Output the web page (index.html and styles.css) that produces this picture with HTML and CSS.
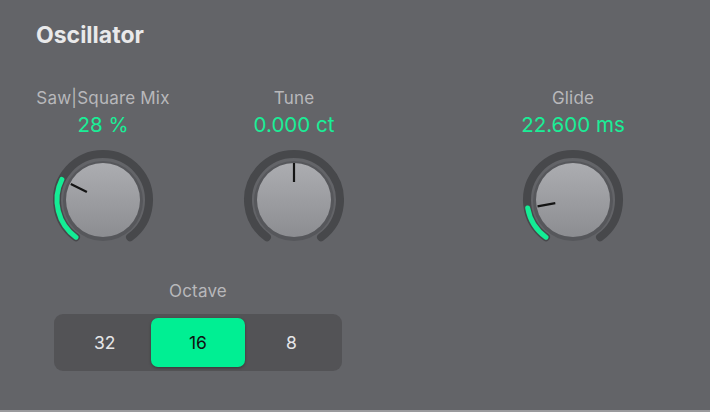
FILE: index.html
```html
<!DOCTYPE html>
<html lang="en">
<head>
    <meta charset="UTF-8">
    <meta name="viewport" content="width=device-width, initial-scale=1.0">
    <title>Oscillator</title>
    <link rel="stylesheet" href="styles.css">
</head>
<body>

    <div class="panel">
        <div class="panel-title">Oscillator</div>

        <div class="knob-row">
            <div class="control">
                <div class="control-label">Saw|Square Mix</div>
                <div class="control-value">28 %</div>
                <svg class="knob" width="110" height="110" viewBox="0 0 110 110">
                    <defs>
                        <linearGradient id="cap1" x1="0" y1="0" x2="0" y2="1">
                            <stop offset="0" stop-color="#acadb1"/>
                            <stop offset="1" stop-color="#8c8d91"/>
                        </linearGradient>
                    </defs>
                    <path class="track" d="M27.96 92.21 A46 46 0 1 1 82.04 92.21"/>
                    <path class="fill" d="M27.96 92.21 A46 46 0 0 1 13.87 34.40"/>
                    <circle class="halo" cx="55" cy="56" r="40"/>
                    <circle cx="55" cy="55" r="37" fill="url(#cap1)"/>
                    <line class="pointer" x1="38.9" y1="46.9" x2="22.8" y2="38.9"/>
                </svg>
            </div>

            <div class="control">
                <div class="control-label">Tune</div>
                <div class="control-value">0.000 ct</div>
                <svg class="knob" width="110" height="110" viewBox="0 0 110 110">
                    <defs>
                        <linearGradient id="cap2" x1="0" y1="0" x2="0" y2="1">
                            <stop offset="0" stop-color="#acadb1"/>
                            <stop offset="1" stop-color="#8c8d91"/>
                        </linearGradient>
                    </defs>
                    <path class="track" d="M27.96 92.21 A46 46 0 1 1 82.04 92.21"/>
                    <circle class="halo" cx="55" cy="56" r="40"/>
                    <circle cx="55" cy="55" r="37" fill="url(#cap2)"/>
                    <line class="pointer" x1="55" y1="37" x2="55" y2="18"/>
                </svg>
            </div>

            <div class="control control-wide">
                <div class="control-label">Glide</div>
                <div class="control-value">22.600 ms</div>
                <svg class="knob" width="110" height="110" viewBox="0 0 110 110">
                    <defs>
                        <linearGradient id="cap3" x1="0" y1="0" x2="0" y2="1">
                            <stop offset="0" stop-color="#acadb1"/>
                            <stop offset="1" stop-color="#8c8d91"/>
                        </linearGradient>
                    </defs>
                    <path class="track" d="M27.96 92.21 A46 46 0 1 1 82.04 92.21"/>
                    <path class="fill" d="M27.96 92.21 A46 46 0 0 1 9.70 63.00"/>
                    <circle class="halo" cx="55" cy="56" r="40"/>
                    <circle cx="55" cy="55" r="37" fill="url(#cap3)"/>
                    <line class="pointer" x1="37.3" y1="58.1" x2="19.5" y2="61.3"/>
                </svg>
            </div>
        </div>

        <div class="octave">
            <div class="control-label">Octave</div>
            <div class="segments">
                <div class="segment">32</div>
                <div class="segment active">16</div>
                <div class="segment">8</div>
            </div>
        </div>
    </div>

</body>
</html>
```

FILE: styles.css
```css
body {
    margin: 0;
    background-color: #636468;
    font-family: Inter, "Liberation Sans", Arial, sans-serif;
}
.panel {
    height: 412px;
    box-sizing: border-box;
    padding-top: 22px;
    border-bottom: 2px solid #9a9a9d;
}
.panel-title {
    margin-left: 36px;
    font-size: 23px;
    font-weight: bold;
    color: #e9e9ea;
    line-height: 26px;
}
.knob-row {
    display: flex;
    margin-top: 41px;
    margin-left: 38px;
    gap: 61px;
}
.control {
    width: 130px;
    display: flex;
    flex-direction: column;
    align-items: center;
}
.control-wide {
    margin-left: 88px;
}
.control-label {
    font-size: 17px;
    line-height: 18px;
    letter-spacing: 0.2px;
    color: #b8b8bb;
    text-align: center;
    white-space: nowrap;
}
.control-value {
    margin-top: 7px;
    font-size: 20.5px;
    line-height: 22px;
    color: #1aee97;
    white-space: nowrap;
}
.knob {
    display: block;
    margin-top: 9px;
}
.track {
    fill: none;
    stroke: #47484b;
    stroke-width: 8;
    stroke-linecap: round;
}
.fill {
    fill: none;
    stroke: #14ed95;
    stroke-width: 5;
    stroke-linecap: round;
}
.halo {
    fill: #56575b;
}
.pointer {
    stroke: #141414;
    stroke-width: 2.2;
}
.octave {
    width: 288px;
    margin: 27px 0 0 54px;
}
.octave .control-label {
    margin-bottom: 14px;
}
.segments {
    display: grid;
    grid-template-columns: 1fr 1fr 1fr;
    padding: 4px;
    background-color: #535356;
    border-radius: 9px;
}
.segment {
    height: 49px;
    line-height: 49px;
    text-align: center;
    font-size: 17.5px;
    color: #e6e6e8;
}
.active {
    background-color: #00ef93;
    color: #111;
    border-radius: 7px;
    box-shadow: 0 1px 3px rgba(0, 0, 0, 0.35);
}
```
